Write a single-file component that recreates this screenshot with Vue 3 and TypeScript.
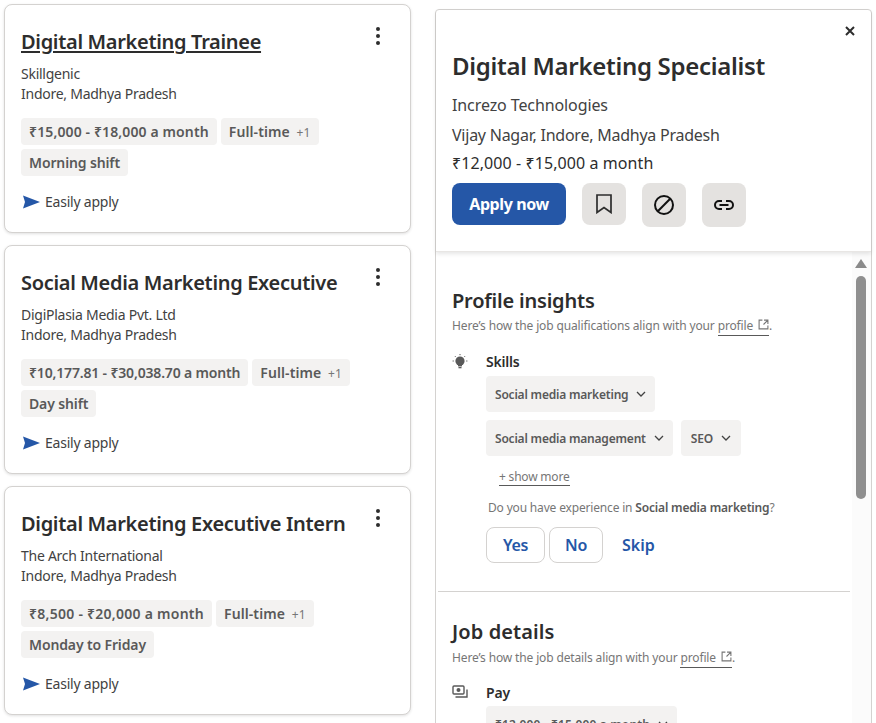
<script setup lang="ts">
interface Job { title: string; company: string; pay: string; payClass: string; shift: string; underline?: boolean }
const jobs: Job[] = [
  { title: 'Digital Marketing Trainee', company: 'Skillgenic', pay: '₹15,000 - ₹18,000 a month', payClass: 'pay-a', shift: 'Morning shift', underline: true },
  { title: 'Social Media Marketing Executive', company: 'DigiPlasia Media Pvt. Ltd', pay: '₹10,177.81 - ₹30,038.70 a month', payClass: 'pay-b', shift: 'Day shift' },
  { title: 'Digital Marketing Executive Intern', company: 'The Arch International', pay: '₹8,500 - ₹20,000 a month', payClass: 'pay-c', shift: 'Monday to Friday' },
]
</script>

<template>
  <div class="page">
    <section class="list">
      <article v-for="job in jobs" :key="job.title" class="card">
        <div class="card-head">
          <h2 class="card-title" :class="{ under: job.underline }">{{ job.title }}</h2>
          <svg class="kebab" width="6" height="20" viewBox="0 0 6 20"><circle cx="3" cy="3" r="2" /><circle cx="3" cy="10" r="2" /><circle cx="3" cy="17" r="2" /></svg>
        </div>
        <p class="meta first">{{ job.company }}</p>
        <p class="meta">Indore, Madhya Pradesh</p>
        <div class="tags">
          <span class="tag" :class="job.payClass">{{ job.pay }}</span>
          <span class="tag type">Full-time <small>+1</small></span>
          <span class="tag">{{ job.shift }}</span>
        </div>
        <div class="easy">
          <svg width="18" height="14" viewBox="0 0 18 14"><path d="M1 0.5 L18 7 L1 13.5 L3 7 Z" fill="#2557a7" /></svg>
          <span>Easily apply</span>
        </div>
      </article>
    </section>

    <section class="panel">
      <header class="panel-head">
        <svg class="close" width="10" height="10" viewBox="0 0 10 10"><path d="M1 1 L9 9 M9 1 L1 9" stroke="#2d2d2d" stroke-width="2" /></svg>
        <h1>Digital Marketing Specialist</h1>
        <p class="company">Increzo Technologies</p>
        <p class="loc">Vijay Nagar, Indore, Madhya Pradesh</p>
        <p class="salary">₹12,000 - ₹15,000 a month</p>
        <div class="actions">
          <button class="apply">Apply now</button>
          <button class="icon-btn short">
            <svg width="16" height="20" viewBox="0 0 16 20"><path d="M1 1 H15 V18.5 L8 13.5 L1 18.5 Z" fill="none" stroke="#2d2d2d" stroke-width="1.7" stroke-linejoin="miter" /></svg>
          </button>
          <button class="icon-btn">
            <svg width="22" height="22" viewBox="0 0 22 22"><circle cx="11" cy="11" r="9" fill="none" stroke="#111" stroke-width="2" /><path d="M4.8 17.2 L17.2 4.8" stroke="#111" stroke-width="2" /></svg>
          </button>
          <button class="icon-btn">
            <svg width="20" height="10" viewBox="0 0 20 10"><path d="M8 1 H5 a4 4 0 0 0 0 8 H8 M12 1 H15 a4 4 0 0 1 0 8 H12 M5.5 5 H14.5" fill="none" stroke="#111" stroke-width="2" /></svg>
          </button>
        </div>
      </header>

      <div class="scroll-area">
        <div class="content">
          <section class="block insights">
            <h3>Profile insights</h3>
            <p class="hint">Here’s how the job qualifications align with your <a>profile <svg width="11" height="11" viewBox="0 0 10 10"><path d="M4 1 H1 V9 H9 V6 M5.5 1 H9 V4.5 M9 1 L5 5" fill="none" stroke="#767676" stroke-width="1" /></svg></a>.</p>
            <div class="row">
              <svg class="row-icon bulb" width="16" height="16" viewBox="0 0 16 16">
                <circle cx="8" cy="7" r="4.6" fill="#595959" /><rect x="6" y="10" width="4" height="2.4" fill="#595959" /><rect x="6.5" y="13" width="3" height="1.3" fill="#595959" />
                <path d="M8 0 V1.2 M0.6 7 H1.8 M14.2 7 H15.4 M2.8 2 L3.6 2.8 M13.2 2 L12.4 2.8" stroke="#595959" stroke-width="1" />
              </svg>
              <div class="row-body">
                <h4>Skills</h4>
                <div class="pills">
                  <div class="pill-line">
                    <span class="pill">Social media marketing <svg class="chev" width="10" height="6" viewBox="0 0 10 6"><path d="M1 1 L5 5 L9 1" fill="none" stroke="#424242" stroke-width="1.3" /></svg></span>
                  </div>
                  <div class="pill-line">
                    <span class="pill">Social media management <svg class="chev" width="10" height="6" viewBox="0 0 10 6"><path d="M1 1 L5 5 L9 1" fill="none" stroke="#424242" stroke-width="1.3" /></svg></span>
                    <span class="pill seo">SEO <svg class="chev" width="10" height="6" viewBox="0 0 10 6"><path d="M1 1 L5 5 L9 1" fill="none" stroke="#424242" stroke-width="1.3" /></svg></span>
                  </div>
                </div>
                <a class="more">+ show more</a>
                <p class="question">Do you have experience in <b>Social media marketing</b>?</p>
                <div class="answers">
                  <button class="answer yes">Yes</button>
                  <button class="answer no">No</button>
                  <button class="skip">Skip</button>
                </div>
              </div>
            </div>
          </section>
          <hr />
          <section class="block details">
            <h3>Job details</h3>
            <p class="hint">Here’s how the job details align with your <a>profile <svg width="11" height="11" viewBox="0 0 10 10"><path d="M4 1 H1 V9 H9 V6 M5.5 1 H9 V4.5 M9 1 L5 5" fill="none" stroke="#767676" stroke-width="1" /></svg></a>.</p>
            <div class="row">
              <svg class="row-icon" width="16" height="14" viewBox="0 0 16 14">
                <rect x="1" y="1" width="11" height="8" rx="1" fill="none" stroke="#595959" stroke-width="1.4" /><circle cx="6.5" cy="5" r="2" fill="#595959" /><path d="M15 4.5 V12 H3.5" fill="none" stroke="#595959" stroke-width="1.4" />
              </svg>
              <div class="row-body">
                <h4>Pay</h4>
                <div class="pills"><div class="pill-line"><span class="pill wide">₹12,000 - ₹15,000 a month <svg class="chev" width="10" height="6" viewBox="0 0 10 6"><path d="M1 1 L5 5 L9 1" fill="none" stroke="#424242" stroke-width="1.3" /></svg></span></div></div>
              </div>
            </div>
          </section>
        </div>
        <div class="scrollbar">
          <span class="arrow"></span>
          <span class="thumb"></span>
        </div>
      </div>
    </section>
  </div>
</template>

<style>
html, body { margin: 0; background: #fff; }
</style>

<style scoped>
.page {
  display: flex;
  align-items: flex-start;
  gap: 24px;
  width: 876px;
  height: 723px;
  padding: 4px 0 0 4px;
  box-sizing: border-box;
  overflow: hidden;
  font-family: "Noto Sans", sans-serif;
  color: #2d2d2d;
}
p, h1, h2, h3, h4 { margin: 0; }
button { font-family: inherit; cursor: pointer; }

.list { display: flex; flex-direction: column; gap: 12px; width: 407px; flex: none; }
.card {
  height: 229px;
  box-sizing: border-box;
  padding: 24px 16px 0;
  border: 1px solid #d4d2d0;
  border-radius: 8px;
  box-shadow: 0 1px 3px rgba(0,0,0,.12);
  background: #fff;
}
.card-head { display: flex; justify-content: space-between; align-items: flex-start; height: 28px; }
.card-title { font-size: 20px; line-height: 26px; font-weight: 600; letter-spacing: -0.32px; white-space: nowrap; }
.card-title.under { text-decoration: underline; text-decoration-thickness: 2px; text-underline-offset: 2px; }
.kebab { fill: #2d2d2d; margin: -3px 13px 0 0; }
.meta { font-size: 14px; line-height: 20px; letter-spacing: -0.26px; color: #424242; }
.meta.first { margin-top: 7px; }
.tags { display: flex; flex-wrap: wrap; gap: 4px; margin-top: 14px; width: 340px; }
.tag {
  background: #f3f2f1;
  border-radius: 4px;
  height: 27px;
  line-height: 27px;
  padding: 0 8px;
  font-size: 14px;
  font-weight: 600;
  letter-spacing: -0.13px;
  color: #595959;
  white-space: nowrap;
}
.tag.pay-a { letter-spacing: 0.12px; }
.tag.pay-b { letter-spacing: -0.17px; }
.tag.pay-c { letter-spacing: 0.26px; }
.tag.type { letter-spacing: 0.1px; }
.tag small { font-size: 12px; font-weight: 400; margin-left: 3px; color: #767676; }
.easy { display: flex; align-items: center; gap: 5px; margin-top: 16px; font-size: 14px; line-height: 20px; letter-spacing: -0.22px; color: #424242; margin-left: 1px; }

.panel {
  position: relative;
  width: 437px;
  flex: none;
  margin-top: 5px;
  height: 740px;
  box-sizing: border-box;
  border: 1px solid #d4d2d0;
  border-radius: 4px 4px 0 0;
}
.panel-head {
  height: 242px;
  box-sizing: border-box;
  padding: 40px 16px 0;
  box-shadow: 0 2px 4px rgba(0,0,0,.1);
  border-bottom: 1px solid #e8e6e4;
  position: relative;
}
.close { position: absolute; top: 16px; right: 16px; }
h1 { font-size: 24px; line-height: 32px; font-weight: 600; letter-spacing: -0.3px; }
.company { margin-top: 11px; font-size: 16px; line-height: 24px; letter-spacing: -0.1px; color: #424242; }
.loc { margin-top: 6px; font-size: 16px; line-height: 24px; letter-spacing: -0.24px; color: #424242; }
.salary { margin-top: 4px; font-size: 16px; line-height: 24px; letter-spacing: 0.08px; color: #2d2d2d; }
.actions { display: flex; gap: 16px; margin-top: 8px; align-items: flex-start; }
.apply {
  width: 114px; height: 42px; border: 0; border-radius: 8px;
  background: #2557a7; color: #fff; font-size: 16px; font-weight: 700; letter-spacing: -0.4px; padding: 0;
}
.icon-btn {
  width: 44px; height: 44px; border: 0; border-radius: 8px; background: #e4e2e0; padding: 0;
  display: flex; align-items: center; justify-content: center;
}
.icon-btn.short { height: 42px; }

.scroll-area { display: flex; height: 490px; overflow: hidden; }
.content { flex: 1; min-width: 0; margin-right: 2px; }
.scrollbar { width: 19px; flex: none; display: flex; flex-direction: column; align-items: center; padding: 7px 1px 0 0; box-sizing: border-box; background: #fbfbfb; }
.arrow { width: 0; height: 0; border-left: 6.5px solid transparent; border-right: 6.5px solid transparent; border-bottom: 9px solid #8a8a8a; }
.thumb { width: 10px; height: 223px; margin-top: 8px; border-radius: 5px; background: #8f8f8f; }

.block { padding: 0 16px; }
.insights { padding-top: 36px; height: 339px; box-sizing: border-box; }
.details { padding-top: 27px; }
h3 { font-size: 20px; line-height: 26px; font-weight: 600; letter-spacing: -0.2px; }
.details h3 { letter-spacing: 0.1px; }
.hint { margin-top: 3px; font-size: 12px; line-height: 18px; letter-spacing: -0.14px; color: #767676; white-space: nowrap; }
.details .hint { margin-top: 4px; }
.hint a { color: #767676; border-bottom: 1px solid #595959; padding-bottom: 1px; }
.hint svg { margin-left: 2px; }
.row { display: flex; margin-top: 18px; }
.details .row { margin-top: 17px; }
.row-icon { width: 16px; flex: none; margin: 1px 18px 0 0; }
.row-body { flex: 1; }
h4 { font-size: 14px; line-height: 18px; font-weight: 600; letter-spacing: -0.2px; }
.pills { display: flex; flex-direction: column; gap: 8px; margin-top: 5px; }
.details .pills { margin-top: 4px; }
.pill-line { display: flex; gap: 8px; }
.pill {
  display: inline-flex; align-items: center; gap: 8px;
  height: 36px; padding: 0 9px; border-radius: 4px; background: #f3f2f1;
  font-size: 12px; font-weight: 600; letter-spacing: -0.2px; color: #595959; white-space: nowrap;
}
.pill.seo { padding: 0 10px; }
.pill.wide { letter-spacing: 0.14px; }
.more { display: inline-block; margin: 12px 0 0 13px; font-size: 12px; line-height: 17px; letter-spacing: -0.2px; color: #767676; border-bottom: 1px solid #595959; }
.question { margin: 13px 0 0 2px; font-size: 12px; line-height: 18px; letter-spacing: -0.17px; color: #767676; white-space: nowrap; }
.question b { font-weight: 600; color: #595959; }
.answers { display: flex; gap: 4px; margin-top: 10px; align-items: center; }
.answer {
  height: 36px; box-sizing: border-box; border: 1px solid #d4d2d0; border-radius: 8px; background: #fff;
  color: #2557a7; font-size: 16px; font-weight: 600; letter-spacing: -0.3px; padding: 0;
}
.yes { width: 59px; }
.no { width: 54px; }
.skip { border: 0; background: none; color: #2557a7; font-size: 16px; font-weight: 600; letter-spacing: 0; padding: 0; margin-left: 15px; }
hr { margin: 0 0 0 2px; border: 0; border-top: 1px solid #d4d2d0; }
</style>
